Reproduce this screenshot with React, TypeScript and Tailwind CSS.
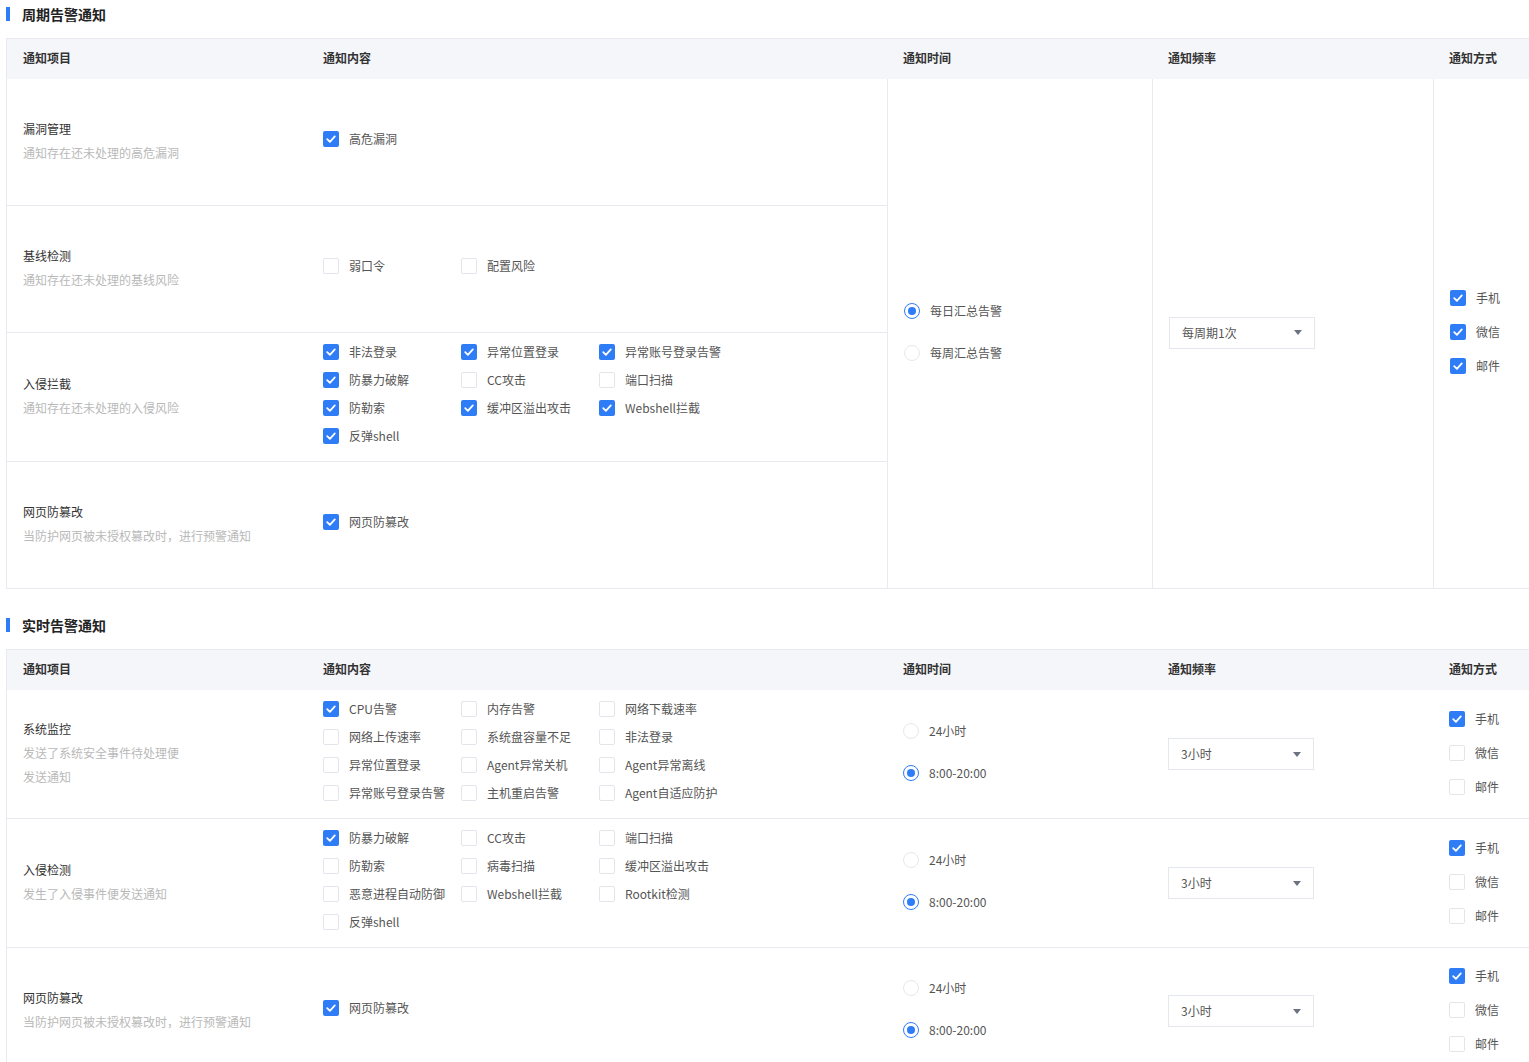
import React from "react";

const FONT = { fontFamily: '"Noto Sans CJK SC", "Noto Sans", sans-serif' };

function Checkbox({ checked }: { checked?: boolean }) {
  return checked ? (
    <span className="flex h-4 w-4 shrink-0 items-center justify-center rounded-[2px] bg-[#2e7cf6]">
      <svg width="12" height="12" viewBox="0 0 12 12">
        <path d="M2.2 6.2 L4.9 8.8 L9.8 3.4" fill="none" stroke="#fff" strokeWidth="1.8" strokeLinecap="round" strokeLinejoin="round" />
      </svg>
    </span>
  ) : (
    <span className="block h-4 w-4 shrink-0 rounded-[2px] border border-[#e3e5eb] bg-white" />
  );
}

function CheckItem({ label, checked }: { label: string; checked?: boolean }) {
  return (
    <div className="flex h-7 items-center gap-[10px]">
      <Checkbox checked={checked} />
      <span className="text-[12px] text-[#555]">{label}</span>
    </div>
  );
}

function Radio({ label, checked }: { label: string; checked?: boolean }) {
  return (
    <div className="flex h-7 items-center gap-[10px]">
      {checked ? (
        <span className="flex h-4 w-4 items-center justify-center rounded-full border-[1.5px] border-[#2e7cf6] bg-white">
          <span className="block h-2 w-2 rounded-full bg-[#2e7cf6]" />
        </span>
      ) : (
        <span className="block h-4 w-4 rounded-full border border-[#e6e8ee] bg-white" />
      )}
      <span className="text-[12px] text-[#555]">{label}</span>
    </div>
  );
}

function Select({ value }: { value: string }) {
  return (
    <div className="flex h-8 w-[146px] items-center justify-between border border-[#e4e7ed] bg-white pl-[12px] pr-[12px]">
      <span className="text-[12px] text-[#555]">{value}</span>
      <svg width="8" height="5" viewBox="0 0 8 5">
        <path d="M0 0 L8 0 L4 5 Z" fill="#6b7280" />
      </svg>
    </div>
  );
}

function ItemCell({ title, desc, descClass }: { title: string; desc: string; descClass?: string }) {
  return (
    <div className="flex flex-col justify-center pb-[2px] pl-4 pr-4">
      <div className="text-[12px] leading-6 text-[#333]">{title}</div>
      <div className={"text-[12px] leading-6 text-[#b9b9b9] " + (descClass ?? "")}>{desc}</div>
    </div>
  );
}

type CI = [string, boolean];

function ContentCell({ items }: { items: CI[] }) {
  return (
    <div className="flex flex-col justify-center pl-4">
      <div className="grid grid-cols-[138px_138px_138px] pb-[6px]">
        {items.map(([l, c]) => (
          <CheckItem key={l} label={l} checked={c} />
        ))}
      </div>
    </div>
  );
}

function Header() {
  return (
    <div className="grid h-10 grid-cols-[300px_580px_265px_281px_1fr] items-center bg-[#f5f6fa] pb-[2px] text-[12px] font-bold text-[#333]">
      <div className="pl-4">通知项目</div>
      <div className="pl-4">通知内容</div>
      <div className="pl-4">通知时间</div>
      <div className="pl-4">通知频率</div>
      <div className="pl-4">通知方式</div>
    </div>
  );
}

function SectionTitle({ text }: { text: string }) {
  return (
    <div className="flex h-[30px] items-center gap-3 pb-[2px] pl-[6px]">
      <span className="block h-[14px] w-1 bg-[#2e7cf6]" />
      <span className="text-[14px] font-bold text-[#222]">{text}</span>
    </div>
  );
}

function Methods({ checks }: { checks: boolean[] }) {
  const labels = ["手机", "微信", "邮件"];
  return (
    <div className="flex flex-col gap-[6px] pb-[3px] pl-4">
      {labels.map((l, i) => (
        <CheckItem key={l} label={l} checked={checks[i]} />
      ))}
    </div>
  );
}

function TimeRadios({ a, b, first }: { a: string; b: string; first: boolean }) {
  return (
    <div className="flex flex-col gap-[14px] pb-[4px] pl-4">
      <Radio label={a} checked={first} />
      <Radio label={b} checked={!first} />
    </div>
  );
}

const periodRows: { title: string; desc: string; items: CI[]; h: string }[] = [
  { title: "漏洞管理", desc: "通知存在还未处理的高危漏洞", items: [["高危漏洞", true]], h: "h-[127px]" },
  { title: "基线检测", desc: "通知存在还未处理的基线风险", items: [["弱口令", false], ["配置风险", false]], h: "h-[127px]" },
  {
    title: "入侵拦截",
    desc: "通知存在还未处理的入侵风险",
    items: [
      ["非法登录", true],
      ["异常位置登录", true],
      ["异常账号登录告警", true],
      ["防暴力破解", true],
      ["CC攻击", false],
      ["端口扫描", false],
      ["防勒索", true],
      ["缓冲区溢出攻击", true],
      ["Webshell拦截", true],
      ["反弹shell", true],
    ],
    h: "h-[129px]",
  },
  { title: "网页防篡改", desc: "当防护网页被未授权篡改时，进行预警通知", items: [["网页防篡改", true]], h: "h-[126px]" },
];

const realRows: { title: string; desc: string; descClass?: string; items: CI[]; h: string; methods: boolean[] }[] = [
  {
    title: "系统监控",
    desc: "发送了系统安全事件待处理便发送通知",
    descClass: "max-w-[160px]",
    items: [
      ["CPU告警", true],
      ["内存告警", false],
      ["网络下载速率", false],
      ["网络上传速率", false],
      ["系统盘容量不足", false],
      ["非法登录", false],
      ["异常位置登录", false],
      ["Agent异常关机", false],
      ["Agent异常离线", false],
      ["异常账号登录告警", false],
      ["主机重启告警", false],
      ["Agent自适应防护", false],
    ],
    h: "h-[129px]",
    methods: [true, false, false],
  },
  {
    title: "入侵检测",
    desc: "发生了入侵事件便发送通知",
    items: [
      ["防暴力破解", true],
      ["CC攻击", false],
      ["端口扫描", false],
      ["防勒索", false],
      ["病毒扫描", false],
      ["缓冲区溢出攻击", false],
      ["恶意进程自动防御", false],
      ["Webshell拦截", false],
      ["Rootkit检测", false],
      ["反弹shell", false],
    ],
    h: "h-[129px]",
    methods: [true, false, false],
  },
  {
    title: "网页防篡改",
    desc: "当防护网页被未授权篡改时，进行预警通知",
    items: [["网页防篡改", true]],
    h: "h-[127px]",
    methods: [true, false, false],
  },
];

export default function App() {
  return (
    <div className="h-[1062px] w-[1529px] overflow-hidden bg-white" style={FONT}>
      <SectionTitle text="周期告警通知" />
      <div className="ml-[6px] mt-2 w-[1524px] border-b border-l border-t border-[#e8eaf0]">
        <Header />
        <div className="flex">
          <div className="flex w-[880px] flex-col">
            {periodRows.map((r, i) => (
              <div
                key={r.title}
                className={"grid grid-cols-[300px_580px] " + r.h + (i < periodRows.length - 1 ? " border-b border-[#e8eaf0]" : "")}
              >
                <ItemCell title={r.title} desc={r.desc} />
                <ContentCell items={r.items} />
              </div>
            ))}
          </div>
          <div className="flex w-[265px] flex-col justify-center border-l border-[#e8eaf0]">
            <TimeRadios a="每日汇总告警" b="每周汇总告警" first={true} />
          </div>
          <div className="flex w-[281px] items-center border-l border-[#e8eaf0] pb-[2px] pl-4">
            <Select value="每周期1次" />
          </div>
          <div className="flex flex-1 items-center border-l border-[#e8eaf0]">
            <Methods checks={[true, true, true]} />
          </div>
        </div>
      </div>

      <div className="mt-[22px]">
        <SectionTitle text="实时告警通知" />
      </div>
      <div className="ml-[6px] mt-2 w-[1524px] border-l border-t border-[#e8eaf0]">
        <Header />
        {realRows.map((r) => (
          <div key={r.title} className={"grid grid-cols-[300px_580px_265px_281px_1fr] border-b border-[#e8eaf0] " + r.h}>
            <ItemCell title={r.title} desc={r.desc} descClass={r.descClass} />
            <ContentCell items={r.items} />
            <div className="flex flex-col justify-center">
              <TimeRadios a="24小时" b="8:00-20:00" first={false} />
            </div>
            <div className="flex items-center pl-4">
              <Select value="3小时" />
            </div>
            <div className="flex items-center">
              <Methods checks={r.methods} />
            </div>
          </div>
        ))}
      </div>
    </div>
  );
}
